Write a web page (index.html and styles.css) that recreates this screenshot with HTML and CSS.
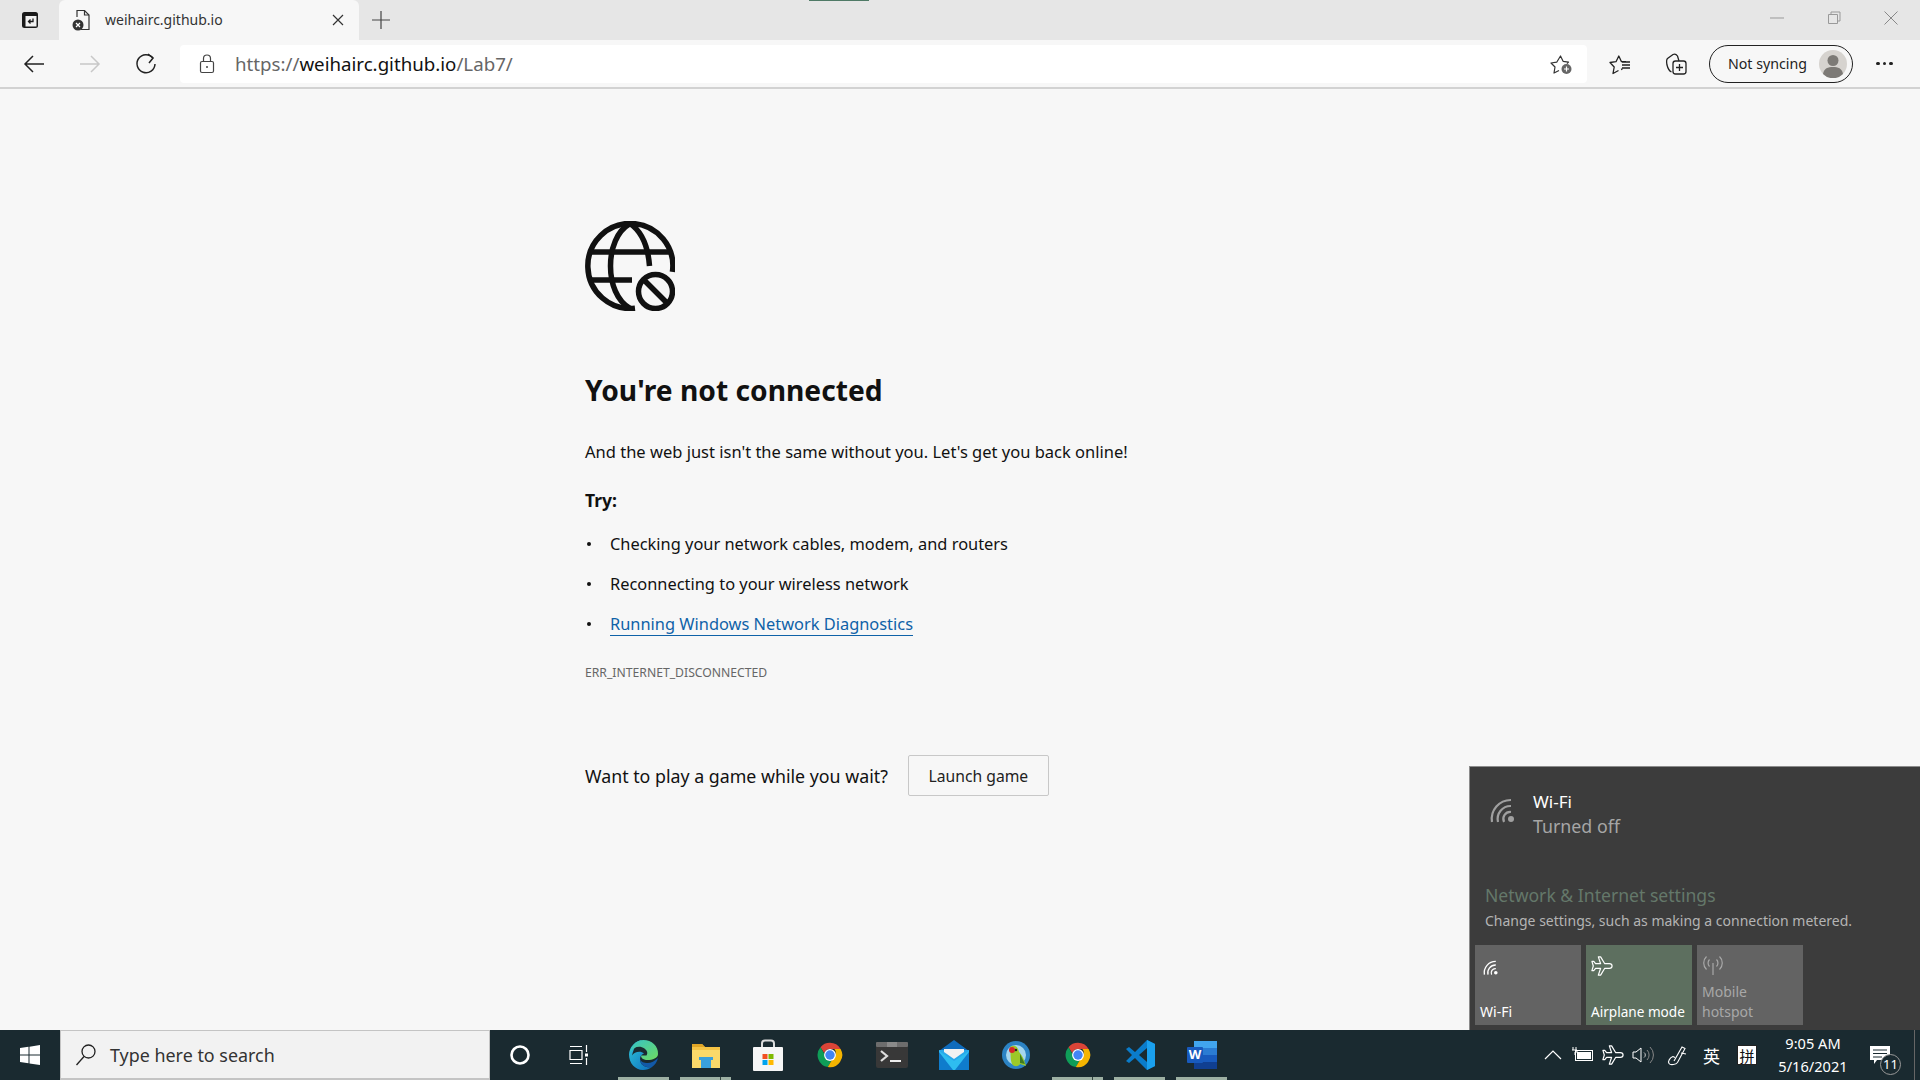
FILE: index.html
```html
<!DOCTYPE html>
<html lang="en">
  <head>
    <meta charset="UTF-8" />
    <title>weihairc.github.io</title>
    <link rel="stylesheet" href="styles.css">
  </head>
  <body>
    <svg class="defs" width="0" height="0">
      <symbol id="wifi" viewBox="0 0 30 30">
        <g fill="none" stroke="currentColor" stroke-width="2.2">
          <path d="M16 26A7 7 0 0 1 23 16"/>
          <path d="M10 26A13 13 0 0 1 23 10"/>
          <path d="M4 26A19 19 0 0 1 23 4"/>
        </g>
        <circle cx="23" cy="23" r="3" fill="currentColor"/>
      </symbol>
      <symbol id="plane" viewBox="0 0 24 24">
        <path d="M23 12c0-1.500-1.500-2.500-3-2.500h-5L10.500 2H8l2.500 7.500H5L3 7H1l1.500 5L1 17h2l2-2.500h5.500L8 22h2.500l4.500-7.500h5c1.500 0 3-1 3-2.500z" fill="none" stroke="currentColor" stroke-width="1.300" stroke-linejoin="round"/>
      </symbol>
      <symbol id="chrome" viewBox="0 0 32 32">
        <path d="M16 2a14 14 0 0 1 12.100 7H16a7 7 0 0 0-6.600 4.700L5.100 7A14 14 0 0 1 16 2z" fill="#db4437"/>
        <path d="M5.100 7l6 10.400A7 7 0 0 0 17.500 22.800L13.500 29.800A14 14 0 0 1 5.100 7z" fill="#0f9d58"/>
        <path d="M28.100 9A14 14 0 0 1 13.500 29.800l6-10.400A7 7 0 0 0 21 9z" fill="#f4b400"/>
        <circle cx="16" cy="16" r="6.800" fill="#fff"/>
        <circle cx="16" cy="16" r="5.400" fill="#4285f4"/>
      </symbol>
    </svg>

    <div class="tabstrip">
      <div class="tab-actions">
        <svg width="20" height="20" viewBox="0 0 20 20"><rect x="2" y="2" width="16" height="16" rx="2.500" fill="#1a1a1a"/><rect x="5.500" y="6" width="11" height="10.500" fill="#f2f2f2"/><path d="M13 8.500v3H8.500M10.500 9.500l-2 2 2 2" fill="none" stroke="#1a1a1a" stroke-width="1.300"/></svg>
      </div>
      <div class="tab">
        <svg class="tab-icon" width="20" height="22" viewBox="0 0 20 22"><path d="M5 8V1.500h7.500L17 6v14.500H9" fill="none" stroke="#333" stroke-width="1.200"/><path d="M12.500 1.500V6H17" fill="none" stroke="#333" stroke-width="1.200"/><circle cx="6" cy="16" r="5.500" fill="#333"/><path d="M4 14l4 4M8 14l-4 4" stroke="#fff" stroke-width="1.200"/></svg>
        <span class="tab-title">weihairc.github.io</span>
        <svg class="tab-close" width="12" height="12" viewBox="0 0 12 12"><path d="M1 1l10 10M11 1L1 11" stroke="#333" stroke-width="1.200"/></svg>
      </div>
      <svg class="new-tab" width="18" height="18" viewBox="0 0 18 18"><path d="M9 0v18M0 9h18" stroke="#444" stroke-width="1.200"/></svg>
      <div class="window-btns">
        <svg width="16" height="16" viewBox="0 0 16 16"><path d="M1 8h14" stroke="#999" stroke-width="1"/></svg>
        <svg width="16" height="16" viewBox="0 0 16 16"><path d="M2.500 4.500h9v9h-9zM5 4.500V2h9v9h-2.500" fill="none" stroke="#999" stroke-width="1"/></svg>
        <svg width="16" height="16" viewBox="0 0 16 16"><path d="M1.500 1.500l13 13M14.500 1.500l-13 13" stroke="#888" stroke-width="1"/></svg>
      </div>
      <div class="top-mark"></div>
    </div>

    <div class="toolbar">
      <svg class="nav-btn" width="22" height="22" viewBox="0 0 22 22"><path d="M21 11H2M10 3l-8 8 8 8" fill="none" stroke="#222" stroke-width="1.500"/></svg>
      <svg class="nav-btn" width="22" height="22" viewBox="0 0 22 22"><path d="M1 11h19M12 3l8 8-8 8" fill="none" stroke="#c8c8c8" stroke-width="1.500"/></svg>
      <svg class="nav-btn" width="22" height="22" viewBox="0 0 22 22"><path d="M18 5A9 9 0 1 0 20 11" fill="none" stroke="#222" stroke-width="1.500"/><path d="M13 1l5 4-4 5" fill="none" stroke="#222" stroke-width="1.500"/></svg>
      <div class="address">
        <svg class="lock" width="16" height="20" viewBox="0 0 16 20"><rect x="1.500" y="7.500" width="13" height="11" rx="1.500" fill="none" stroke="#444" stroke-width="1.200"/><path d="M4.500 7.500V4.500a3.500 3.500 0 0 1 7 0v3" fill="none" stroke="#444" stroke-width="1.200"/><circle cx="8" cy="13" r="1" fill="#444"/></svg>
        <span class="url">https://<b>weihairc.github.io</b>/Lab7/</span>
        <svg class="add-fav" width="24" height="24" viewBox="0 0 24 24"><path d="M9 18.500l-5 2.500 1-6-4-4 5.700-.8L10.500 4l2.600 5.300 5.400.8-1.500 1.500" fill="none" stroke="#333" stroke-width="1.200" stroke-linejoin="round"/><circle cx="16.500" cy="17" r="5" fill="#666"/><path d="M16.500 14.500v5M14 17h5" stroke="#fff" stroke-width="1.200"/></svg>
      </div>
      <svg class="tool-btn" width="24" height="24" viewBox="0 0 24 24"><path d="M9.500 18.500L4 21.500l1.200-6.500L1 10.500l6-.8L9.800 4l2.700 5.700h4.500M13 13h8M13 10h8M13 16h8M12.500 16.500l.5 1.500" fill="none" stroke="#222" stroke-width="1.300" stroke-linejoin="round"/></svg>
      <svg class="tool-btn" width="24" height="24" viewBox="0 0 24 24"><rect x="9" y="9" width="13" height="13" rx="2.500" fill="none" stroke="#222" stroke-width="1.300"/><path d="M15.500 12v7M12 15.500h7" stroke="#222" stroke-width="1.300"/><path d="M7.500 20C5 19 4 17 3 13 2.500 10 2 8 3.500 6.500L9 2.500c2-1 3.500 0 4.500 1.500l1.500 5" fill="none" stroke="#222" stroke-width="1.300"/></svg>
      <div class="sync-pill">
        <span>Not syncing</span>
        <svg width="28" height="28" viewBox="0 0 28 28"><circle cx="14" cy="14" r="14" fill="#d6d3cf"/><circle cx="14" cy="10.500" r="5.500" fill="#7d7a76"/><path d="M4 24c1-6 5-7 10-7s9 1 10 7a14 14 0 0 1-20 0z" fill="#7d7a76"/></svg>
      </div>
      <div class="more-btn"><i></i><i></i><i></i></div>
    </div>

    <div class="page">
      <div class="error-content">
        <svg class="globe" width="90" height="90" viewBox="0 0 90 90">
          <g fill="none" stroke="#111" stroke-width="5.500">
            <path d="M87.400 51A42.500 42.500 0 1 0 50 87.200"/>
            <path d="M45 2.500C32 10 25.500 27 25.500 45 25.500 63 32 80 45 87.500"/>
            <path d="M45 2.500C56 10 63 25 64.500 45"/>
            <path d="M6 31H84M6 59H47"/>
            <circle cx="70.500" cy="70.500" r="17"/>
            <path d="M58.500 58.500l24 24"/>
          </g>
        </svg>
        <h1>You're not connected</h1>
        <p class="lead">And the web just isn't the same without you. Let's get you back online!</p>
        <p class="try">Try:</p>
        <ul class="suggestions">
          <li>Checking your network cables, modem, and routers</li>
          <li>Reconnecting to your wireless network</li>
          <li><a href="#">Running Windows Network Diagnostics</a></li>
        </ul>
        <div class="err-code">ERR_INTERNET_DISCONNECTED</div>
        <div class="game-row">
          <span>Want to play a game while you wait?</span>
          <button>Launch game</button>
        </div>
      </div>

      <div class="flyout">
        <div class="net-row">
          <svg class="net-icon" width="30" height="30"><use href="#wifi"/></svg>
          <div>
            <div class="net-name">Wi-Fi</div>
            <div class="net-state">Turned off</div>
          </div>
        </div>
        <div class="net-settings">Network &amp; Internet settings</div>
        <div class="net-hint">Change settings, such as making a connection metered.</div>
        <div class="tiles">
          <div class="tile">
            <svg class="tile-wifi" width="18" height="18"><use href="#wifi"/></svg>
            <span>Wi-Fi</span>
          </div>
          <div class="tile on">
            <svg width="22" height="22"><use href="#plane"/></svg>
            <span class="tile-wide">Airplane mode</span>
          </div>
          <div class="tile off">
            <svg width="22" height="22" viewBox="0 0 22 22"><path d="M11 9v12M7.500 5.500a5 5 0 0 0 0 7M14.500 5.500a5 5 0 0 1 0 7M4.500 2.500a9 9 0 0 0 0 13M17.500 2.500a9 9 0 0 1 0 13" fill="none" stroke="currentColor" stroke-width="1.200"/></svg>
            <span>Mobile<br>hotspot</span>
          </div>
        </div>
      </div>
    </div>

    <div class="taskbar">
      <div class="start">
        <svg width="20" height="20" viewBox="0 0 20 20"><path d="M0 3l8.500-1.200V9.500H0zM9.500 1.700L20 0v9.500H9.500zM0 10.500h8.500v7.700L0 17zM9.500 10.500H20V20L9.500 18.400z" fill="#fff"/></svg>
      </div>
      <div class="search">
        <svg width="22" height="24" viewBox="0 0 22 24"><circle cx="13.500" cy="8.500" r="6.500" fill="none" stroke="#222" stroke-width="1.300"/><path d="M9 13.500L1.500 22" stroke="#222" stroke-width="1.300"/></svg>
        <span>Type here to search</span>
      </div>
      <div class="apps">
        <div class="app">
          <svg width="22" height="22" viewBox="0 0 22 22"><circle cx="11" cy="11" r="8.500" fill="none" stroke="#fff" stroke-width="2.600"/></svg>
        </div>
        <div class="app">
          <svg class="task-view" width="20" height="24" viewBox="0 0 20 24"><path d="M1 3.500h12M1 20.500h12M1 7.500h12v9H1zM17.500 2v7M17.500 15v7" fill="none" stroke="#fff" stroke-width="1.200"/><rect x="16" y="10.500" width="3" height="3" fill="#fff"/></svg>
        </div>
        <div class="app active">
          <svg width="32" height="32" viewBox="0 0 32 32">
            <defs>
              <linearGradient id="edgeA" x1="0" y1="0" x2="1" y2="1"><stop offset="0" stop-color="#2fc6d8"/><stop offset="1" stop-color="#0d6ec0"/></linearGradient>
              <linearGradient id="edgeB" x1="0" y1="0" x2="1" y2="1"><stop offset="0" stop-color="#35c1c8"/><stop offset="1" stop-color="#6fdc5f"/></linearGradient>
            </defs>
            <path d="M15.500 1A15 15 0 0 0 1 15.500C1 24 7 31 15 31c3.500 0 6.500-1 9-3-5 1-12-1-12-8 0-3 2-5 4-5.500-4-3.500-10-1-12 2C6 8 10 1 15.500 1z" fill="url(#edgeA)"/>
            <path d="M15.500 1C7 1 3 8 2.500 13c3-5 9-7 14-3.500 3 2.200 3.500 5 2 7H13c0 3 3 4.500 6.500 4.500 5 0 10.500-2 10.500-6C30.500 7 23.500 1 15.500 1z" fill="url(#edgeB)"/>
            <path d="M12 20c0 7 7 9 12 8 3-2 5-5 6-9-3 3-7 5-10.500 5C16 24 13 23 12 20z" fill="#1259a8"/>
          </svg>
        </div>
        <div class="app active split-r">
          <svg width="30" height="28" viewBox="0 0 30 28"><path d="M1 3h10l3 3h15v21H1z" fill="#f6c445"/><path d="M1 3h10l3 3H1z" fill="#e0a526"/><path d="M1 9h28v18H1z" fill="#fbd96a"/><path d="M8 16h14v3h-2v8h-10v-8H8z" fill="#3aa0dc"/></svg>
        </div>
        <div class="app">
          <svg width="30" height="32" viewBox="0 0 30 32"><path d="M9 9V4.500A3 3 0 0 1 12 1.500h6a3 3 0 0 1 3 3V9" fill="none" stroke="#ddd" stroke-width="2"/><rect x="0" y="8" width="30" height="24" rx="1" fill="#f6f6f6"/><rect x="9.500" y="15" width="5" height="5" fill="#f25022"/><rect x="15.500" y="15" width="5" height="5" fill="#7fba00"/><rect x="9.500" y="21" width="5" height="5" fill="#00a4ef"/><rect x="15.500" y="21" width="5" height="5" fill="#ffb900"/></svg>
        </div>
        <div class="app">
          <svg width="28" height="28"><use href="#chrome"/></svg>
        </div>
        <div class="app">
          <svg width="32" height="26" viewBox="0 0 32 26"><rect width="32" height="26" rx="2" fill="#383838"/><rect width="32" height="5" rx="1" fill="#6d6d6d"/><rect x="11" width="10" height="5" fill="#8a8a8a"/><path d="M5 9l6 5-6 5" fill="none" stroke="#ddd" stroke-width="2.200"/><rect x="14" y="18" width="11" height="2" fill="#eee"/></svg>
        </div>
        <div class="app">
          <svg width="30" height="30" viewBox="0 0 30 30"><path d="M0 11L15 0l15 11v3H0z" fill="#0f6cbd"/><path d="M0 10h30v20H0z" fill="#28a8ea"/><path d="M0 11l15 10 15-10v19H0z" fill="#2ebdf0"/><path d="M5 9h20v3l-10 7-10-7z" fill="#f2f2f2"/><path d="M0 12l14 18H0zM30 12L16 30h14z" fill="#0f7ccc"/></svg>
        </div>
        <div class="app">
          <svg width="30" height="30" viewBox="0 0 30 30"><circle cx="15" cy="15" r="14" fill="#2c83c4"/><circle cx="15" cy="15" r="10" fill="#a6d6ef"/><path d="M9 7c5-3 8 0 9 5 2 2 5 6 7 14l-6-2c-2 3-6 3-8 0-2-5-1-10-2-17z" fill="#9cc927"/><circle cx="11" cy="10" r="3" fill="#d62828"/><path d="M19 14l5 10-5-1z" fill="#3e7a22"/><circle cx="15" cy="10" r="1.200" fill="#222"/></svg>
        </div>
        <div class="app active split-l">
          <svg width="28" height="28"><use href="#chrome"/></svg>
        </div>
        <div class="app active">
          <svg width="30" height="32" viewBox="0 0 30 32"><path d="M22 1l8 4v22l-8 4-12-12-6 5-3-2 6-6-6-6 3-2 6 5z" fill="#0a7ccb"/><path d="M22 1l8 4v22l-8 4V1z" fill="#1aa0ee"/><path d="M22 9l-8 7 8 7z" fill="#1a2a30"/></svg>
        </div>
        <div class="app active">
          <svg width="30" height="28" viewBox="0 0 30 28"><rect x="7" y="0" width="23" height="28" rx="1" fill="#2b7cd3"/><rect x="7" y="0" width="23" height="7" fill="#41a5ee"/><rect x="7" y="14" width="23" height="7" fill="#185abd"/><rect x="7" y="21" width="23" height="7" fill="#103f91"/><rect x="0" y="6" width="16" height="16" rx="1" fill="#185abd"/><text x="8" y="18" class="word-w">W</text></svg>
        </div>
      </div>
      <div class="tray">
        <svg class="tray-caret" width="18" height="10" viewBox="0 0 18 10"><path d="M1 9l8-8 8 8" fill="none" stroke="#fff" stroke-width="1.200"/></svg>
        <svg class="tray-icon" width="22" height="16" viewBox="0 0 22 16"><rect x="3.500" y="3.500" width="17" height="10" fill="none" stroke="#fff"/><rect x="5" y="5" width="14" height="7" fill="#fff"/><path d="M1 0v3M4 0v3M0 3h5v2H3v3" fill="none" stroke="#fff"/></svg>
        <svg class="tray-icon" width="22" height="22"><use href="#plane"/></svg>
        <svg class="tray-icon" width="22" height="18" viewBox="0 0 22 18"><path d="M1 6h3l5-4v14l-5-4H1z" fill="none" stroke="#fff"/><path d="M12 6.500a3 3 0 0 1 0 5" fill="none" stroke="#ccc"/><path d="M15 4a7 7 0 0 1 0 10M18 1a11 11 0 0 1 0 16" fill="none" stroke="#888"/></svg>
        <svg class="tray-pen" width="22" height="22" viewBox="0 0 22 22"><path d="M8 17L16 3l3 1.500-7.500 14c-1.500 2-7 3-8.500 1s1-6 4-7l2 1M15 9l5 1" fill="none" stroke="#fff" stroke-width="1.100"/></svg>
        <span class="ime-lang">英</span>
        <span class="ime-box">拼</span>
        <div class="clock">
          <div>9:05 AM</div>
          <div>5/16/2021</div>
        </div>
        <div class="notify">
          <svg width="20" height="18" viewBox="0 0 20 18"><path d="M0 0h20v14H7l-3 4v-4H0z" fill="#fff"/><path d="M3 4h14M3 7.500h14M3 11h9" stroke="#1a2a30" stroke-width="1.200"/></svg>
          <span class="notify-badge">11</span>
        </div>
        <div class="show-desktop"></div>
      </div>
    </div>
  </body>
</html>
```

FILE: styles.css
```css
* {
  margin: 0;
  padding: 0;
  box-sizing: border-box;
}

html,
body {
  height: 100%;
}

body {
  display: flex;
  flex-direction: column;
  overflow: hidden;
  background: #f7f7f7;
  color: #111;
  font-family: "Noto Sans", "Open Sans", sans-serif;
}

.defs {
  position: absolute;
}

/* tab strip */
.tabstrip {
  position: relative;
  display: flex;
  align-items: flex-end;
  height: 40px;
  background: #e6e6e6;
}

.tab-actions {
  display: flex;
  justify-content: center;
  align-items: center;
  width: 59px;
  height: 40px;
}

.tab {
  display: flex;
  align-items: center;
  width: 300px;
  height: 40px;
  padding: 0 15px 0 13px;
  background: #f7f7f7;
  border-radius: 6px 6px 0 0;
}

.tab-title {
  margin: -1px 0 0 13px;
  font-size: 14px;
  color: #333;
}

.tab-close {
  margin-left: auto;
}

.new-tab {
  align-self: center;
  margin-left: 13px;
}

.window-btns {
  display: flex;
  align-self: center;
  gap: 41px;
  margin: -4px 21px 0 auto;
}

.top-mark {
  position: absolute;
  left: 809px;
  top: 0;
  width: 60px;
  height: 1px;
  background: #4f7a66;
}

/* toolbar */
.toolbar {
  display: flex;
  align-items: center;
  height: 49px;
  padding-left: 23px;
  background: #f7f7f7;
  border-bottom: 2px solid #d2d2d2;
}

.nav-btn {
  margin-right: 34px;
}

.address {
  display: flex;
  align-items: center;
  width: 1407px;
  height: 38px;
  margin-left: -11px;
  padding: 0 13px 0 19px;
  background: #fff;
  border-radius: 4px;
}

.url {
  margin-left: 20px;
  font-size: 18.7px;
  color: #666;
}

.url b {
  font-weight: 400;
  color: #111;
}

.add-fav {
  margin-left: auto;
}

.tool-btn {
  margin-left: 22px;
  margin-right: 9px;
}

.sync-pill {
  display: flex;
  align-items: center;
  justify-content: space-between;
  width: 144px;
  height: 38px;
  margin-left: 12px;
  padding: 0 5px 0 18px;
  border: 1.5px solid #222;
  border-radius: 19px;
  font-size: 14.2px;
  color: #222;
}

.more-btn {
  display: flex;
  gap: 3px;
  margin-left: 23px;
}

.more-btn i {
  width: 3.5px;
  height: 3.5px;
  background: #222;
  border-radius: 50%;
}

/* error page */
.page {
  position: relative;
  flex: 1;
  min-height: 0;
}

.error-content {
  display: flex;
  flex-direction: column;
  align-items: flex-start;
  padding: 132px 0 0 585px;
}

h1 {
  margin-top: 57px;
  font-size: 28.2px;
  line-height: 44px;
  font-weight: 700;
}

.lead {
  margin-top: 28px;
  font-size: 16.5px;
  line-height: 24px;
}

.try {
  margin-top: 24px;
  font-size: 17.5px;
  line-height: 24px;
  font-weight: 700;
}

.suggestions {
  margin-top: 20px;
  list-style: none;
}

.suggestions li {
  position: relative;
  padding-left: 25px;
  margin-bottom: 16px;
  font-size: 16.4px;
  line-height: 24px;
}

.suggestions li::before {
  content: "";
  position: absolute;
  left: 2px;
  top: 10px;
  width: 4px;
  height: 4px;
  background: #111;
  border-radius: 50%;
}

.suggestions a {
  color: #0f62a8;
  text-decoration: none;
  border-bottom: 1px solid #0f62a8;
}

.err-code {
  margin-top: 12px;
  font-size: 12.2px;
  line-height: 18px;
  color: #666;
}

.game-row {
  display: flex;
  align-items: center;
  gap: 20px;
  margin-top: 73px;
  font-size: 17.8px;
}

.game-row button {
  width: 141px;
  height: 41px;
  background: #f7f7f7;
  border: 1px solid #c8c8c8;
  border-radius: 2px;
  font-family: inherit;
  font-size: 15.7px;
  color: #222;
}

/* network flyout */
.flyout {
  position: absolute;
  right: 0;
  bottom: 0;
  width: 451px;
  height: 264px;
  padding: 23px 0 5px 5px;
  background: #3c3c3c;
  border-top: 1px solid #8c8c8c;
  border-left: 1px solid #8c8c8c;
  color: #fff;
}

.net-row {
  display: flex;
  gap: 15px;
  padding-left: 13px;
  height: 92px;
}

.net-icon {
  margin-top: 6px;
  color: #a0a0a0;
}

.net-name {
  font-size: 17px;
  line-height: 24px;
}

.net-state {
  font-size: 17.8px;
  line-height: 24px;
  color: #a6a6a6;
}

.net-settings {
  margin-left: 10px;
  font-size: 17.6px;
  line-height: 26px;
  color: #64786a;
}

.net-hint {
  margin: 3px 0 0 10px;
  font-size: 14px;
  line-height: 20px;
  color: #b4b4b4;
}

.tiles {
  display: flex;
  gap: 5px;
  margin-top: 14px;
}

.tile {
  display: flex;
  flex-direction: column;
  justify-content: space-between;
  width: 106px;
  height: 80px;
  padding: 14px 5px 3px;
  background: #636363;
  font-size: 14px;
  line-height: 20px;
}

.tile.on {
  padding-top: 10px;
  background: #5d6f5f;
}

.tile.off {
  padding-top: 9px;
  color: #a8a8a8;
}

.tile-wifi {
  margin-left: 2px;
}

.tile-wide {
  font-size: 13.6px;
  white-space: nowrap;
}

/* taskbar */
.taskbar {
  display: flex;
  flex-shrink: 0;
  height: 50px;
  background: #1a2a30;
  color: #fff;
}

.start {
  display: flex;
  justify-content: center;
  align-items: center;
  width: 60px;
}

.search {
  display: flex;
  align-items: center;
  gap: 13px;
  width: 430px;
  padding-left: 14px;
  background: #f2f2f2;
  border: 1px solid #c4c4c4;
  border-bottom-width: 2px;
  font-size: 17.9px;
  color: #333;
}

.apps {
  display: flex;
  gap: 11px;
  margin-left: 4px;
}

.app {
  position: relative;
  display: flex;
  justify-content: center;
  align-items: center;
  width: 51px;
}

.app.active::after {
  content: "";
  position: absolute;
  left: 0;
  right: 0;
  bottom: 0;
  height: 3px;
  background: #9db0a3;
}

.app.split-r::before,
.app.split-l::before {
  content: "";
  position: absolute;
  z-index: 1;
  top: 47px;
  bottom: 0;
  right: 10px;
  width: 1px;
  background: #33443f;
}

.task-view {
  margin-right: 5px;
}

.word-w {
  font-size: 13px;
  font-weight: 700;
  fill: #fff;
  text-anchor: middle;
}

.tray {
  position: relative;
  display: flex;
  align-items: center;
  margin-left: auto;
  padding-right: 30px;
}

.tray-caret {
  margin-right: 10px;
}

.tray-icon {
  margin-right: 8px;
}

.tray-pen {
  margin: 0 15px 0 4px;
}

.ime-lang {
  margin-right: 17px;
  font-family: "Noto Sans CJK SC", sans-serif;
  font-size: 17px;
}

.ime-box {
  display: flex;
  justify-content: center;
  align-items: center;
  width: 20px;
  height: 20px;
  background: #fff;
  border: 1px solid #222;
  font-family: "Noto Sans CJK SC", sans-serif;
  font-size: 15px;
  color: #111;
}

.clock {
  width: 92px;
  margin: 0 11px 0 10px;
  font-size: 14.6px;
  line-height: 23px;
  text-align: center;
}

.notify {
  position: relative;
  display: flex;
}

.notify-badge {
  position: absolute;
  left: 10px;
  top: 8px;
  width: 21px;
  height: 21px;
  background: #1a2a30;
  border: 1.5px solid #999;
  border-radius: 50%;
  font-size: 13px;
  line-height: 18px;
  text-align: center;
}

.show-desktop {
  position: absolute;
  right: 5px;
  top: 0;
  bottom: 0;
  width: 1px;
  background: #666;
}
```
